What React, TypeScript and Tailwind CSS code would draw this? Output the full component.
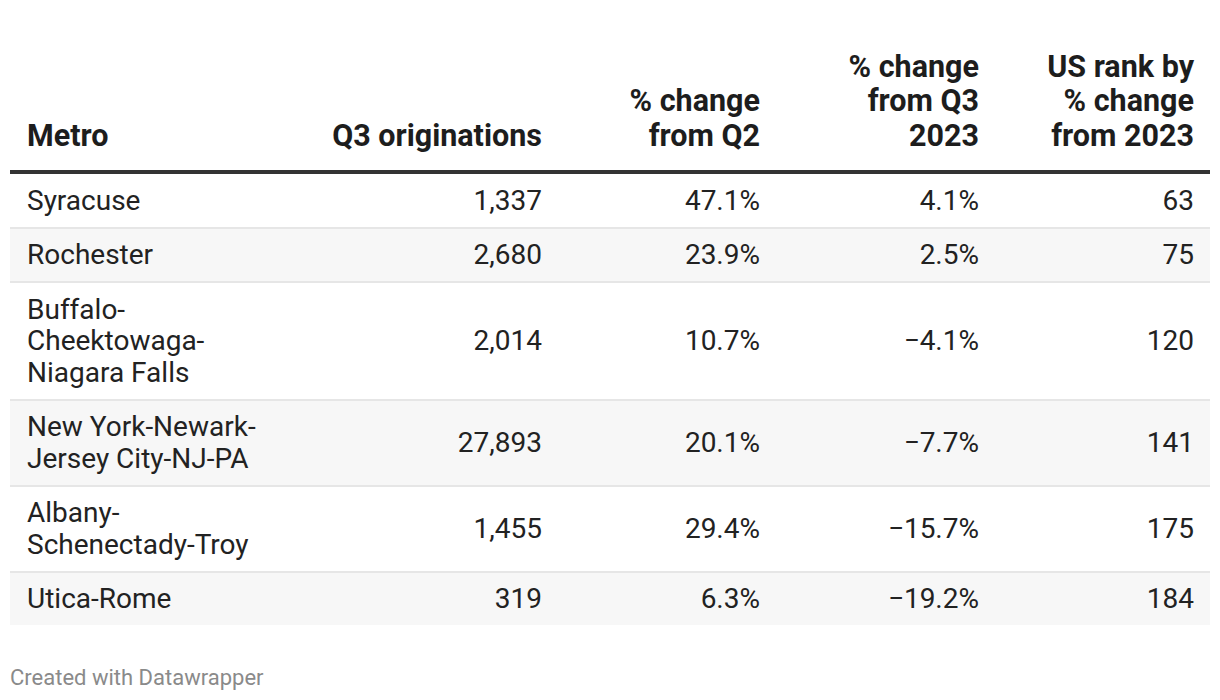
const cols = 'grid grid-cols-[265px_283px_218px_219px_215px]';

const headers = [
  { lines: ['Metro'], left: true },
  { lines: ['Q3 originations'] },
  { lines: ['% change', 'from Q2'] },
  { lines: ['% change', 'from Q3', '2023'] },
  { lines: ['US rank by', '% change', 'from 2023'] },
];

const rows = [
  { metro: ['Syracuse'], orig: '1,337', q2: '47.1%', q3: '4.1%', rank: '63' },
  { metro: ['Rochester'], orig: '2,680', q2: '23.9%', q3: '2.5%', rank: '75' },
  { metro: ['Buffalo-', 'Cheektowaga-', 'Niagara Falls'], orig: '2,014', q2: '10.7%', q3: '\u22124.1%', rank: '120' },
  { metro: ['New York-Newark-', 'Jersey City-NJ-PA'], orig: '27,893', q2: '20.1%', q3: '\u22127.7%', rank: '141' },
  { metro: ['Albany-', 'Schenectady-Troy'], orig: '1,455', q2: '29.4%', q3: '\u221215.7%', rank: '175' },
  { metro: ['Utica-Rome'], orig: '319', q2: '6.3%', q3: '\u221219.2%', rank: '184' },
];

export default function App() {
  return (
    <div className="w-[1220px] h-[700px] bg-white pt-[10px] px-[10px] font-[Roboto,sans-serif] text-[28px] text-[#222]">
      <div className={`${cols} h-[164px] border-b-4 border-[#333] text-[#1d1d1d]`}>
        {headers.map((h, i) => (
          <div
            key={i}
            className={`flex flex-col justify-end pb-[17px] font-bold text-[30.5px] leading-[34.5px] whitespace-nowrap ${h.left ? 'pl-[17px] pr-4 items-start' : 'px-4 items-end text-right'}`}
          >
            {h.lines.map((l) => (
              <span key={l}>{l}</span>
            ))}
          </div>
        ))}
      </div>

      {rows.map((r, i) => (
        <div
          key={r.orig}
          className={`${cols} leading-[31.5px] ${i % 2 === 1 ? 'bg-[#f7f7f7]' : 'bg-white'} ${i < rows.length - 1 ? 'border-b-2 border-[#e6e6e6]' : ''}`}
        >
          <div className="pl-[17px] pr-4 py-[10.5px] flex flex-col whitespace-nowrap">
            {r.metro.map((m) => (
              <span key={m}>{m}</span>
            ))}
          </div>
          <div className="px-4 flex items-center justify-end">{r.orig}</div>
          <div className="px-4 flex items-center justify-end">{r.q2}</div>
          <div className="px-4 flex items-center justify-end">{r.q3}</div>
          <div className="px-4 flex items-center justify-end">{r.rank}</div>
        </div>
      ))}

      <div className="mt-[40px] text-[22px] leading-[26px] text-[#8a8a8a]">Created with Datawrapper</div>
    </div>
  );
}
